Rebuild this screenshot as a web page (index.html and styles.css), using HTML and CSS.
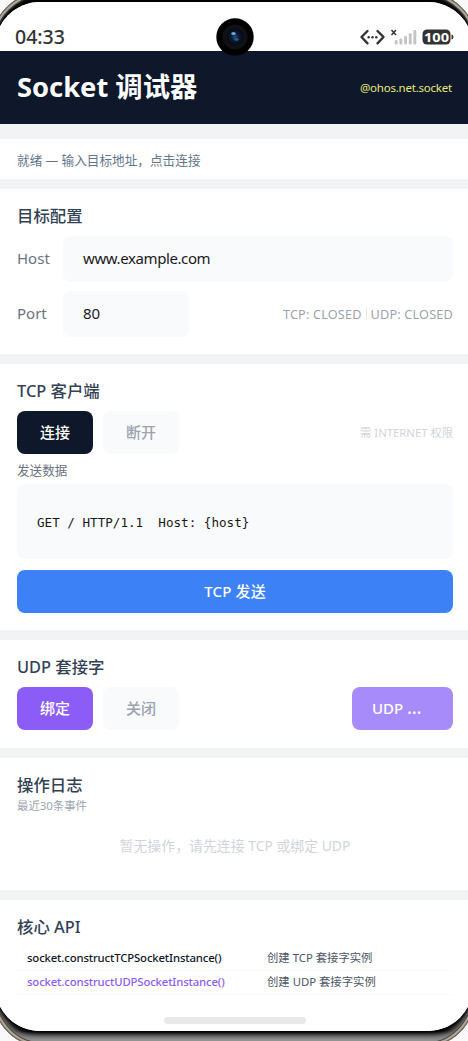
FILE: index.html
```html
<!DOCTYPE html>
<html lang="zh-CN">
<head>
<meta charset="utf-8">
<title>Socket 调试器</title>
<link rel="stylesheet" href="styles.css">
</head>
<body>
<div class="device">
  <div class="screen">
    <div class="statusbar">
      <span class="clock">04:33</span>
      <svg class="status-icons" width="96" height="20" viewBox="0 0 96 20">
        <g fill="none" stroke="#333" stroke-width="2.4" stroke-linecap="round" stroke-linejoin="round"><path d="M8.500 4 2.500 10l6 6.300M18.500 4l6 6-6 6.300"/></g>
        <g fill="#333"><circle cx="9.700" cy="10.200" r="1.200"/><circle cx="13.500" cy="10.200" r="1.200"/><circle cx="17.300" cy="10.200" r="1.200"/></g>
        <path d="m32.500 3 4.500 5M37 3 32.500 8" stroke="#333" stroke-width="1.500"/>
        <g fill="#c4c4c4"><rect x="35.700" y="13" width="2.900" height="4.500" rx="1"/><rect x="40.400" y="11.500" width="2.900" height="6" rx="1"/><rect x="45.100" y="9" width="2.900" height="8.500" rx="1"/><rect x="49.800" y="6.300" width="2.900" height="11.200" rx="1"/><rect x="54.400" y="3" width="2.900" height="14.500" rx="1"/></g>
        <rect x="63.500" y="2.500" width="28" height="15" rx="4.500" fill="#333"/>
        <path d="M92.500 7.500q2 .3 2 2.500t-2 2.500z" fill="#333"/>
        <text x="77.500" y="14.700" text-anchor="middle" textLength="25" lengthAdjust="spacingAndGlyphs" class="battery">100</text>
      </svg>
    </div>
    <header class="header">
      <h1 class="title">Socket 调试器</h1>
      <span class="module">@ohos.net.socket</span>
    </header>
    <div class="notice">就绪 — 输入目标地址，点击连接</div>

    <section class="card target">
      <h2>目标配置</h2>
      <div class="row field-row"><label>Host</label><div class="input host">www.example.com</div></div>
      <div class="row field-row"><label>Port</label><div class="input port">80</div>
        <div class="states"><span>TCP: CLOSED</span><i></i><span>UDP: CLOSED</span></div></div>
    </section>

    <section class="card tcp">
      <h2>TCP 客户端</h2>
      <div class="row"><button class="btn dark">连接</button><button class="btn idle">断开</button><span class="hint">需 INTERNET 权限</span></div>
      <div class="caption">发送数据</div>
      <div class="payload">GET / HTTP/1.1  Host: {host}</div>
      <button class="btn send">TCP 发送</button>
    </section>

    <section class="card udp">
      <h2>UDP 套接字</h2>
      <div class="row"><button class="btn violet">绑定</button><button class="btn idle">关闭</button><button class="btn udp-send">UDP <span>…</span></button></div>
    </section>

    <section class="card log">
      <h2>操作日志</h2>
      <div class="log-sub">最近30条事件</div>
      <div class="empty">暂无操作，请先连接 TCP 或绑定 UDP</div>
    </section>

    <section class="card api">
      <h2>核心 API</h2>
      <div class="api-row"><span class="fn">socket.constructTCPSocketInstance()</span><span>创建 TCP 套接字实例</span></div>
      <div class="api-row"><span class="fn purple">socket.constructUDPSocketInstance()</span><span>创建 UDP 套接字实例</span></div>
      <div class="home-bar"></div>
    </section>
    <svg class="camera" width="38" height="38" viewBox="0 0 38 38">
      <defs><radialGradient id="lens"><stop offset="0" stop-color="#284f7e"/><stop offset=".45" stop-color="#0b1b35"/><stop offset="1" stop-color="#07090f"/></radialGradient></defs>
      <circle cx="19" cy="19" r="18.700" fill="#020202"/><circle cx="19" cy="19" r="12.500" fill="#101114"/><circle cx="19" cy="19" r="8.500" fill="url(#lens)"/>
      <ellipse cx="17.500" cy="15.500" rx="2.200" ry="1.500" fill="#69a9dc"/><ellipse cx="20.500" cy="21.500" rx="2.200" ry="1.200" fill="#315b91"/>
    </svg>
  </div>
</div>
</body>
</html>
```
FILE: styles.css
```css
* { box-sizing: border-box; }
html, body { margin: 0; width: 468px; height: 1041px; overflow: hidden; background: #f9f9f9; }
body { font-family: "Noto Sans", "Noto Sans CJK SC", sans-serif; font-size: 15px; color: #182431; }
.device { width: 488px; height: 1055px; margin: -9px 0 0 -10px; padding: 11px 5px 15px; border-radius: 56px 56px 50px 50px / 56px 56px 60px 60px; background: linear-gradient(#000 0, #000 1040px, #555 1045px, #aaa 1050px); box-shadow: inset 0 0 0 1px #6b655c, inset 0 0 0 3px #b0a797, inset 0 0 0 4px #4b4741, inset 0 -3px 6px 4px #8b8b8b; }
.screen { position: relative; display: flex; flex-direction: column; gap: 10px; height: 1029px; border-radius: 45px; overflow: hidden; background: #f1f3f5; box-shadow: 0 0 3px 1px #000; }
.statusbar { display: flex; justify-content: space-between; align-items: center; height: 49px; margin-bottom: -10px; padding: 20px 18px 0 20px; background: #fff; }
.clock { font-size: 19.5px; font-weight: 500; letter-spacing: 0; color: #333; }
.status-icons { display: block; }
.battery { font-family: "Noto Sans"; font-size: 13px; font-weight: 700; fill: #fff; }
.camera { position: absolute; left: 221px; top: 16px; }
.header { display: flex; justify-content: space-between; align-items: center; height: 73px; margin-bottom: 5px; padding: 0 21px 1px 22px; background: #0f172a; }
.title { margin: 0; font-size: 27.3px; line-height: 40px; font-weight: 700; color: #fff; }
.module { font-size: 11.5px; letter-spacing: -.22px; color: #e6ea7c; }
.notice { height: 40px; padding: 0 22px; font-size: 12.65px; line-height: 43px; color: #64748b; background: #fff; }
.card { padding: 16px 20px 0 22px; background: #fff; }
h2 { margin: 0; height: 22px; font-size: 16.4px; line-height: 22px; font-weight: 500; color: #334155; white-space: nowrap; }
.row { display: flex; align-items: center; gap: 10px; }
.target { height: 165px; }
.field-row { gap: 0; height: 46px; margin-top: 9px; }
label { width: 46px; padding-bottom: 2px; color: #6b7280; }
.input { height: 46px; padding-left: 20px; border-radius: 8px; line-height: 45px; letter-spacing: -.4px; color: #191919; background: #f9fafc; }
.host { flex: 1; }
.port { width: 126px; letter-spacing: 0; }
.states { display: flex; align-items: center; gap: 4px; margin-left: auto; padding-bottom: 1px; font-size: 12.7px; letter-spacing: .17px; color: #9ca3af; }
.states i { width: 1px; height: 12px; background: #e5e7eb; }
.tcp { height: 266px; }
.tcp .row, .udp .row { margin-top: 9px; }
.btn { width: 76px; height: 43px; padding: 0; border: 0; border-radius: 8px; font: 500 15px/41px "Noto Sans", "Noto Sans CJK SC", sans-serif; color: #fff; }
.dark { background: #0f172a; }
.idle { color: #9ca3af; background: #f9fafc; }
.hint { margin-left: auto; padding-bottom: 2px; font-size: 11.3px; color: #d1d5db; }
.caption { height: 30px; font-size: 12.6px; line-height: 34px; color: #6b7280; }
.payload { height: 75px; padding-left: 20px; border-radius: 8px; font: 12.6px/77px "DejaVu Sans Mono", monospace; white-space: pre; color: #191919; background: #f9fafc; }
.send { display: block; width: 100%; margin-top: 11px; letter-spacing: .15px; background: #3c82f6; }
.udp { height: 108px; }
.violet { background: #8b5cf6; }
.udp-send { width: 101px; margin-left: auto; padding-left: 20px; text-align: left; background: #a78bfa; }
.udp-send span { font-size: 18px; line-height: 1; }
.log { height: 132px; }
.log-sub { height: 20px; font-size: 11.4px; line-height: 20px; color: #9ca3af; }
.empty { margin-top: 20px; font-size: 13.9px; line-height: 20px; text-align: center; color: #d1d5db; }
.api { height: 131px; }
.api h2 { margin-bottom: 9px; }
.api-row { display: grid; grid-template-columns: 240px 1fr; height: 24px; padding-left: 10px; border-bottom: 1px solid #f9fafb; font-size: 11.35px; line-height: 22px; color: #4b5563; white-space: nowrap; }
.fn { font-weight: 500; letter-spacing: -.15px; color: #0f172a; }
.purple { color: #8b5cf6; }
.home-bar { width: 142px; height: 7px; margin: 22px 0 0 147px; border-radius: 4px; background: #e9e9e9; }
```
